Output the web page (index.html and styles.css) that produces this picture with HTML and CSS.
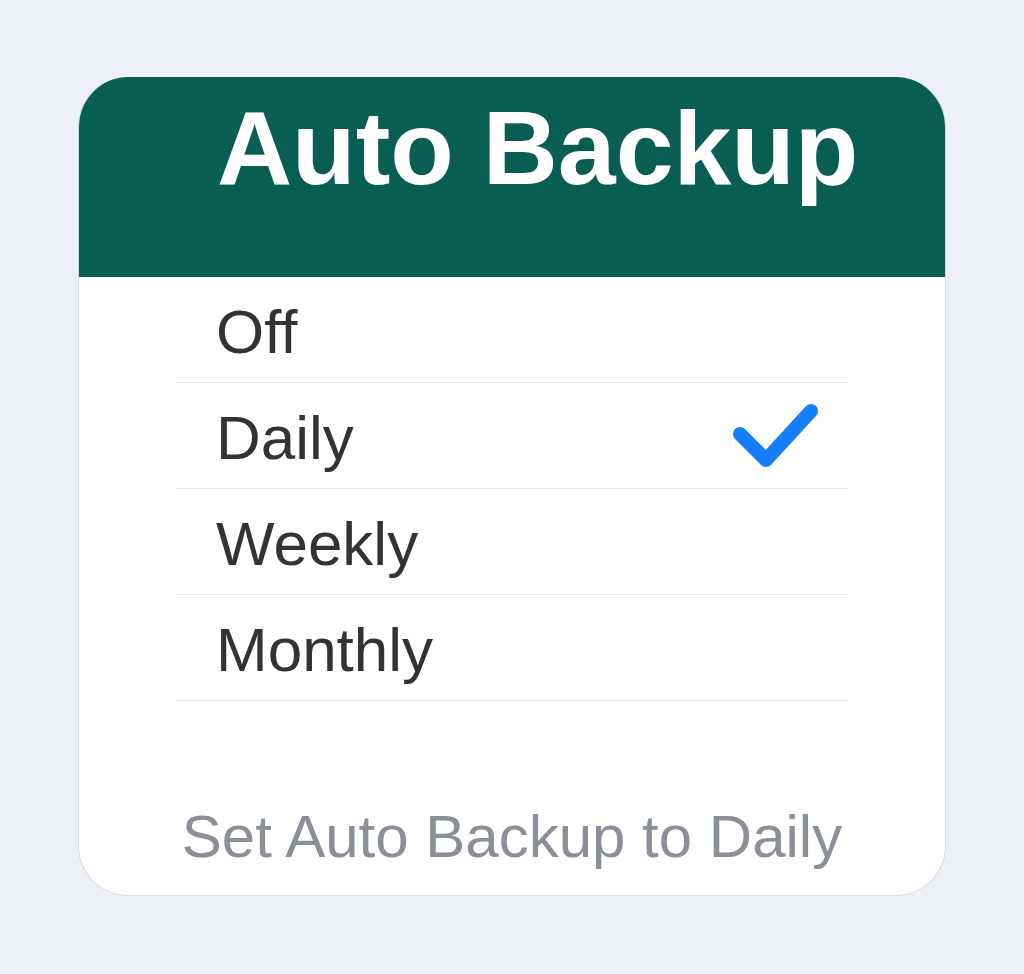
FILE: index.html
```html
<!DOCTYPE html>
<html lang="en">
<head>
    <meta charset="UTF-8">
    <meta name="viewport" content="width=device-width, initial-scale=1.0">
    <title>Auto Backup</title>
    <link rel="stylesheet" href="styles.css">
</head>
<body>
<div class="card">
    <div class="header">
        <h1 class="title">Auto Backup</h1>
    </div>
    <ul class="options">
        <li class="option"><span class="label">Off</span></li>
        <li class="option selected">
            <span class="label">Daily</span>
            <svg class="check" width="86" height="66" viewBox="0 0 86 66">
                <path d="M8 31 L34 57 L79 8" fill="none" stroke="#157efb" stroke-width="14" stroke-linecap="round" stroke-linejoin="round"/>
            </svg>
        </li>
        <li class="option"><span class="label">Weekly</span></li>
        <li class="option"><span class="label">Monthly</span></li>
    </ul>
    <p class="status">Set Auto Backup to Daily</p>
</div>
</body>
</html>
```

FILE: styles.css
```css
body {
    margin: 0;
    padding-top: 77px;
    display: flex;
    justify-content: center;
    background-color: #edf0f5;
    font-family: "Liberation Sans", Arial, sans-serif;
}

.card {
    width: 868px;
    box-sizing: border-box;
    background-color: #fff;
    border: 1px solid #d5dae1;
    border-top: none;
    border-radius: 50px;
    overflow: hidden;
}

.header {
    height: 200px;
    box-sizing: border-box;
    padding: 19px 0 0 138px;
    background-color: #095e54;
}

.title {
    margin: 0;
    color: #fff;
    font-size: 104px;
    font-weight: bold;
    line-height: 104px;
}

.options {
    list-style: none;
    margin: 0 97px;
    padding: 0;
}

.option {
    height: 106px;
    box-sizing: border-box;
    display: flex;
    align-items: center;
    justify-content: space-between;
    padding: 0 30px 0 40px;
    border-bottom: 1px solid #e6e8eb;
}

.label {
    padding-top: 5px;
    color: #333;
    font-size: 62px;
    line-height: 62px;
}

.check {
    display: block;
}

.status {
    margin: 106px 0 0;
    padding-bottom: 28px;
    text-align: center;
    color: #8a8f98;
    font-size: 60px;
    line-height: 60px;
}
```
